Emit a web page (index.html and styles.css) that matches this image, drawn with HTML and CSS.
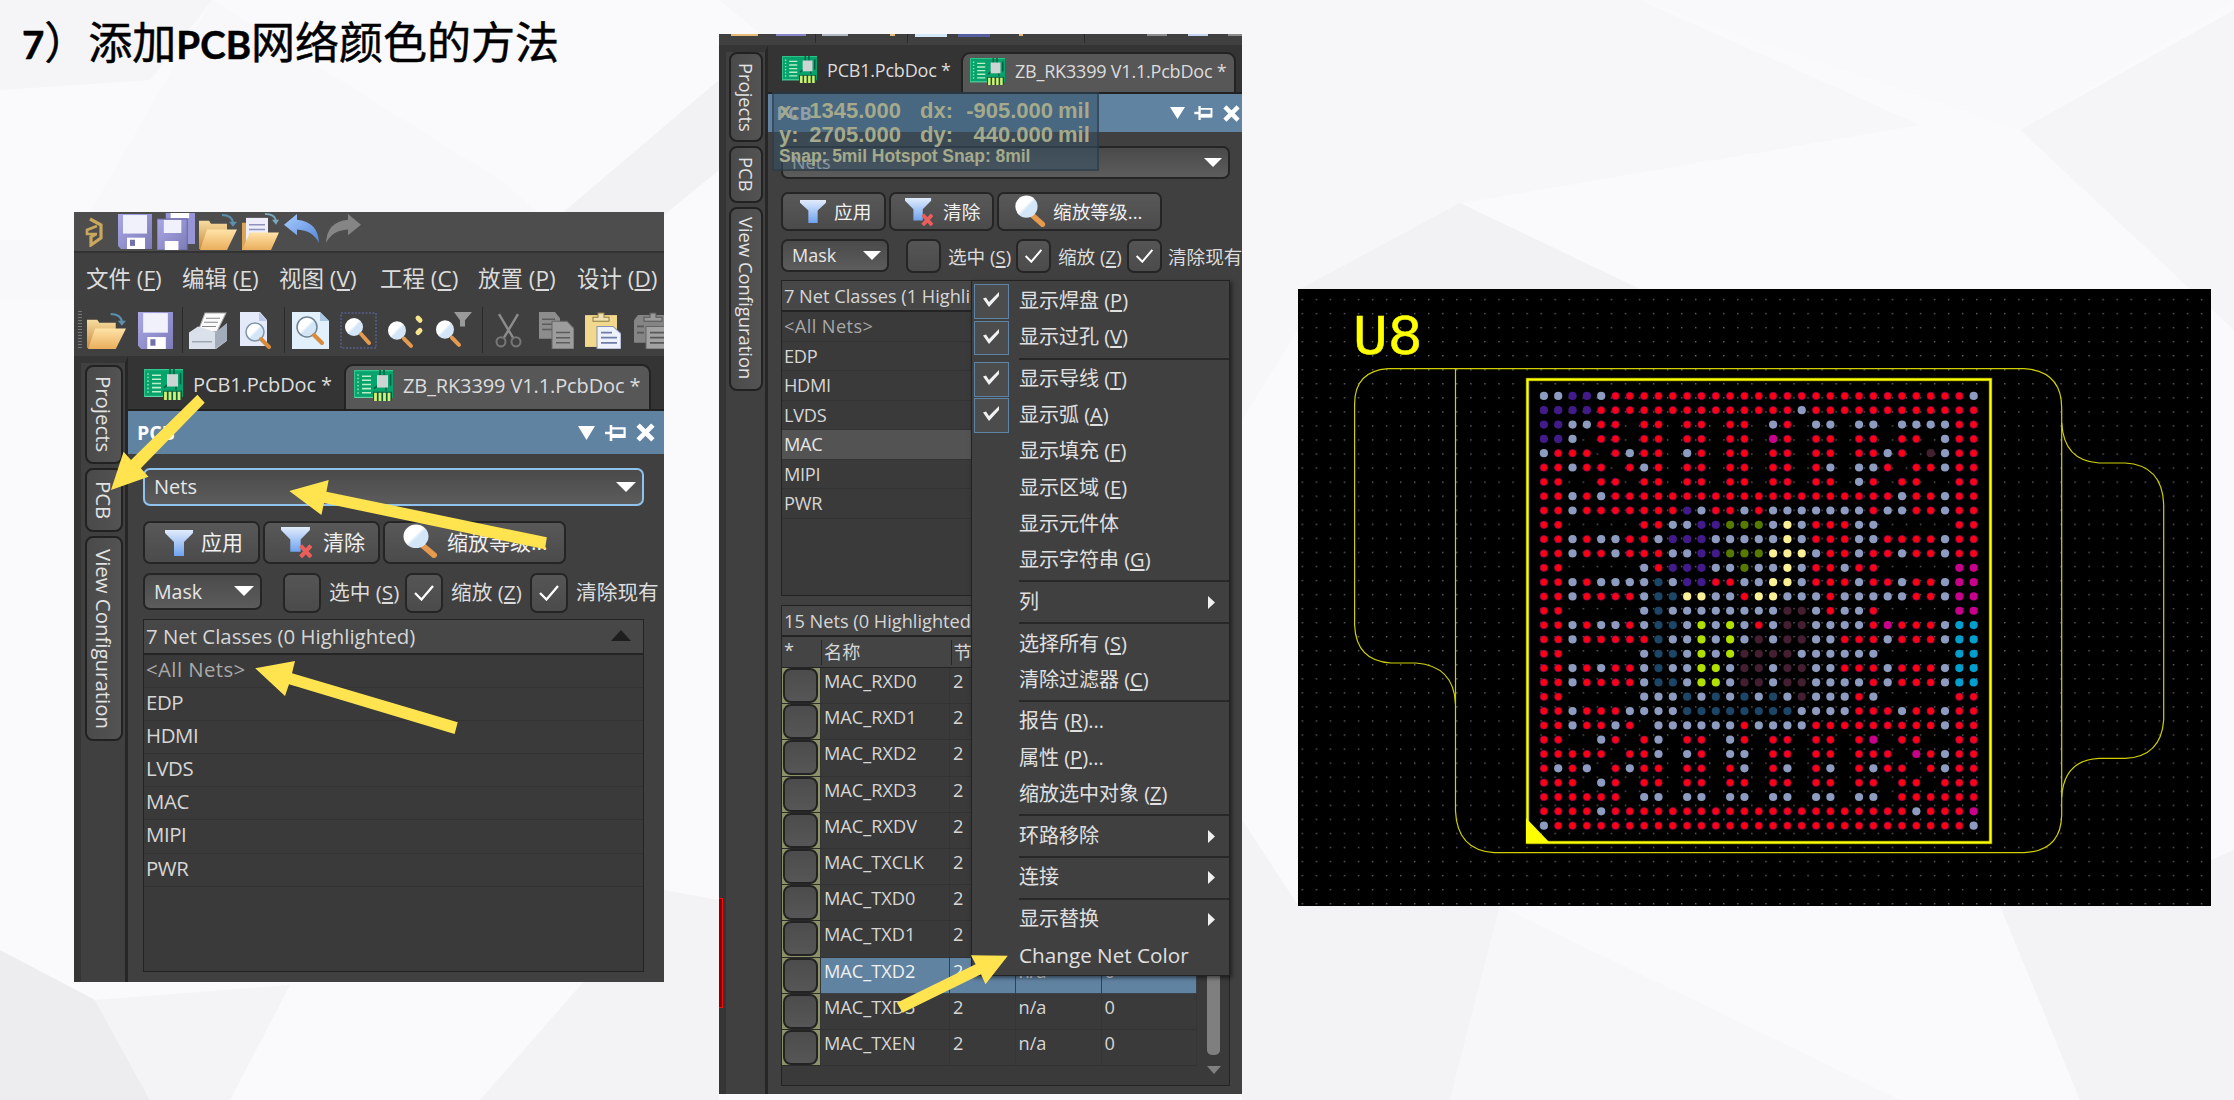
FILE: index.html
```
<!DOCTYPE html>
<html lang="zh-CN">
<head>
<meta charset="utf-8">
<title>添加PCB网络颜色的方法</title>
<link rel="stylesheet" href="styles.css">
</head>
<body>
<svg class="defs" aria-hidden="true">
  <defs>
    <linearGradient id="gFolder" x1="0" y1="0" x2="0" y2="1"><stop offset="0" stop-color="#ffe3a8"/><stop offset="1" stop-color="#e9ae5c"/></linearGradient>
    <linearGradient id="gFolderBack" x1="0" y1="0" x2="0" y2="1"><stop offset="0" stop-color="#f7dca0"/><stop offset="1" stop-color="#c98b3c"/></linearGradient>
    <linearGradient id="gDisk" x1="0" y1="0" x2="1" y2="1"><stop offset="0" stop-color="#aaa8e6"/><stop offset="1" stop-color="#7d7cb8"/></linearGradient>
    <linearGradient id="gGlass" x1="0" y1="0" x2="1" y2="1"><stop offset="0.45" stop-color="#fff"/><stop offset="0.55" stop-color="#d3e6f8"/></linearGradient>
    <linearGradient id="gFunnel" x1="0" y1="0" x2="0" y2="1"><stop offset="0" stop-color="#e2ecfb"/><stop offset="1" stop-color="#6ea3f0"/></linearGradient>
    <linearGradient id="gUndo" x1="0" y1="0" x2="1" y2="1"><stop offset="0" stop-color="#a8ceff"/><stop offset="1" stop-color="#5585d8"/></linearGradient>
  </defs>
  <symbol id="logo" viewBox="0 0 20 30" preserveAspectRatio="none"><path d="M6 2L17 8V21L7 28V20L12 17" fill="none" stroke="#c9a75c" stroke-width="3.200"/><path d="M13 9L3 13V17H13" fill="none" stroke="#c9a75c" stroke-width="2.600"/></symbol>
  <symbol id="disk" viewBox="0 0 34 34" preserveAspectRatio="none"><path d="M0 0H34V34H3L0 31Z" fill="url(#gDisk)"/><path d="M5 1H29V19H5Z" fill="#f1f1fb"/><path d="M9 23H27V34H9Z" fill="#fff"/><path d="M12 25H17V31H12Z" fill="#7472ad"/></symbol>
  <symbol id="disks" viewBox="0 0 39 37" preserveAspectRatio="none"><path d="M9 0H39V31H9Z" fill="#9795d6"/><path d="M14 0H33V5H14Z" fill="#fff"/><path d="M0 6H31V37H0Z" fill="url(#gDisk)" stroke="#6664a0"/><path d="M7 7H25V20H7Z" fill="#f1f1fb"/><path d="M8 28H22V37H8Z" fill="#fff"/></symbol>
  <symbol id="folder" viewBox="0 0 38 38" preserveAspectRatio="none"><path d="M0 8H10L12 11H28V37H0Z" fill="url(#gFolderBack)"/><path d="M8 17H38L28 38H1Z" fill="url(#gFolder)"/><path d="M23 2Q33 2 34 10" fill="none" stroke="#5b8fae" stroke-width="2.200"/><path d="M30 9H38L34 14Z" fill="#5b8fae"/></symbol>
  <symbol id="folderdoc" viewBox="0 0 38 38" preserveAspectRatio="none"><path d="M1 10H8V38H1Z" fill="#dca556"/><path d="M5 5H27V36H5Z" fill="#eeedfa"/><path d="M8 12H24M8 17H24M8 22H24" stroke="#8f92ba" stroke-width="1.600"/><path d="M9 20H38L30 38H1Z" fill="url(#gFolder)"/><path d="M24 1Q34 1 35 8" fill="none" stroke="#7aa9bd" stroke-width="2"/><path d="M31 7H38L35 12Z" fill="#7aa9bd"/></symbol>
  <symbol id="undo" viewBox="0 0 36 30" preserveAspectRatio="none"><path d="M0 11L13 0V6Q34 8 35 30Q29 17 13 16V22Z" fill="url(#gUndo)"/></symbol>
  <symbol id="redo" viewBox="0 0 36 30" preserveAspectRatio="none"><path d="M36 11L23 0V6Q2 8 1 30Q7 17 23 16V22Z" fill="#858585"/></symbol>
  <symbol id="print" viewBox="0 0 38 36" preserveAspectRatio="none"><path d="M16 1H37L28 19H9Z" fill="#fbfbfb" stroke="#aaa"/><path d="M17 6H31M15 10H29M13 14H27" stroke="#888"/><path d="M0 20L9 14L28 20L38 11V28L27 36H0Z" fill="#dbe1ea"/><path d="M26 20L38 11V28L26 36Z" fill="#a3acba"/><path d="M3 29H23" stroke="#838d9c"/></symbol>
  <symbol id="preview" viewBox="0 0 32 37" preserveAspectRatio="none"><path d="M0 0H20L27 8V34H0Z" fill="#e4eafa"/><path d="M19 0V9H27" fill="#bcc8ea"/><circle cx="15" cy="20" r="9" fill="url(#gGlass)" stroke="#7f98a8" stroke-width="1.500"/><path d="M21 27L29 35" stroke="#d98b3d" stroke-width="4" stroke-linecap="round"/></symbol>
  <symbol id="zoomdoc" viewBox="0 0 37 37" preserveAspectRatio="none"><path d="M0 0H28L37 9V37H0Z" fill="#e2f0fb"/><path d="M28 0V9H37" fill="#aac8e4"/><circle cx="15" cy="15" r="10" fill="url(#gGlass)" stroke="#6f8391" stroke-width="1.500"/><path d="M22 23L30 31" stroke="#d98b3d" stroke-width="4" stroke-linecap="round"/></symbol>
  <symbol id="mag" viewBox="0 0 36 36" preserveAspectRatio="none"><path d="M21 23L32 33" stroke="#e59a4d" stroke-width="6" stroke-linecap="round"/><circle cx="14" cy="13" r="12.500" fill="url(#gGlass)"/></symbol>
  <symbol id="zoomsel" viewBox="0 0 37 37" preserveAspectRatio="none"><path d="M1 1H36V36H1Z" fill="none" stroke="#5f6cb4" stroke-dasharray="2 1.500"/><circle cx="14" cy="15" r="9" fill="url(#gGlass)"/><path d="M21 22L29 31" stroke="#e59a4d" stroke-width="4" stroke-linecap="round"/></symbol>
  <symbol id="zoomdots" viewBox="0 0 36 36" preserveAspectRatio="none"><circle cx="9" cy="18" r="9" fill="url(#gGlass)"/><path d="M16 26L23 33" stroke="#e59a4d" stroke-width="4" stroke-linecap="round"/><path d="M30 6L32 8M30 20L32 18" stroke="#f6e58a" stroke-width="5" stroke-linecap="round"/></symbol>
  <symbol id="zoomfilter" viewBox="0 0 36 36" preserveAspectRatio="none"><circle cx="9" cy="17" r="9" fill="url(#gGlass)"/><path d="M16 25L23 32" stroke="#e59a4d" stroke-width="4" stroke-linecap="round"/><path d="M18 0H36L29 8V14H24V8Z" fill="#9a9a9a"/></symbol>
  <symbol id="cut" viewBox="0 0 27 36" preserveAspectRatio="none"><path d="M4 2L18 25M23 2L9 25" stroke="#8c8c8c" stroke-width="2.400"/><circle cx="6" cy="29" r="4.500" fill="none" stroke="#777" stroke-width="2"/><circle cx="21" cy="29" r="4.500" fill="none" stroke="#777" stroke-width="2"/></symbol>
  <symbol id="copy" viewBox="0 0 35 36" preserveAspectRatio="none"><path d="M0 0H16L21 6V26H0Z" fill="#8d8d8d"/><path d="M3 7H16M3 12H17M3 17H17" stroke="#5c5c5c" stroke-width="1.500"/><path d="M13 9H28L35 16V36H13Z" fill="#9c9c9c" stroke="#666"/><path d="M17 20H31M17 25H31M17 30H31" stroke="#5c5c5c" stroke-width="1.500"/></symbol>
  <symbol id="paste" viewBox="0 0 36 36" preserveAspectRatio="none"><path d="M0 3H32V34H0Z" fill="#f2d88c"/><path d="M8 9V5H13V1H19V5H24V9Z" fill="#efe0ae" stroke="#8d7c42"/><path d="M12 14H28L36 21V36H12Z" fill="#eef2fc" stroke="#8492b4"/><path d="M16 20H27M16 25H32M16 30H32" stroke="#6e7ea6" stroke-width="1.600"/></symbol>
  <symbol id="pasteoff" viewBox="0 0 36 36" preserveAspectRatio="none"><path d="M4 3H36V30H0V8Z" fill="#858585"/><path d="M10 9V5H16V1H22V5H28V9Z" fill="#999" stroke="#555"/><path d="M12 14H36V36H12Z" fill="#a2a2a2" stroke="#666"/><path d="M3 14H10M3 20H10M16 20H33M16 25H33M16 30H33" stroke="#585858" stroke-width="1.600"/></symbol>
  <symbol id="pcb" viewBox="0 0 39 30" preserveAspectRatio="none"><path d="M0 0H39V27H35V30H19V27H0Z" fill="#06a36c"/><path d="M0 26.500H19" stroke="#6fdcae"/><path d="M.6 27V.6H39" fill="none" stroke="#35c78d"/><path d="M8 6H17M8 10H17M8 14H17M8 18H17M8 22H17" stroke="#baf0c8" stroke-width="1.500"/><path d="M4 4V24" stroke="#97e3bb" stroke-width="1.500" stroke-dasharray="1.500 2"/><path d="M26 0V6M30 0V6M36.500 4V15M20 18L24 15M32 16V20" stroke="#045e44" stroke-width="1.600"/><path d="M23 5H34V17H23Z" fill="#cdd5d4"/><path d="M19 21H38V30H19Z" fill="#045e44"/><path d="M21.500 22V30M26 22V30M30.500 22V30M35 22V30" stroke="#d8ee72" stroke-width="2.800"/></symbol>
  <symbol id="funnel" viewBox="0 0 28 26" preserveAspectRatio="none"><path d="M0 0H28V3L19 12V26H9V12L0 3Z" fill="url(#gFunnel)"/></symbol>
  <symbol id="unfilter" viewBox="0 0 30 30" preserveAspectRatio="none"><path d="M0 0H28V3L19 12V24H9V12L0 3Z" fill="url(#gFunnel)"/><path d="M19 18L29 29M29 18L19 29" stroke="#ea5f5c" stroke-width="4"/></symbol>
  <symbol id="tick" viewBox="0 0 20 16"><path d="M1 8L7.500 14.500L19 1" fill="none" stroke="#fff" stroke-width="2.300"/></symbol>
  <symbol id="mtick" viewBox="0 0 18 16"><path d="M0 6.500L3 5.500L6 10L16 0V4L6 15Z" fill="#f2f2f2"/></symbol>
  <symbol id="down" viewBox="0 0 18 10" preserveAspectRatio="none"><path d="M0 0H18L9 10Z" fill="currentColor"/></symbol>
  <symbol id="right" viewBox="0 0 7 13"><path d="M0 0L7 6.500L0 13Z" fill="#f0f0f0"/></symbol>
  <symbol id="pin" viewBox="0 0 21 16"><path d="M0 8H6M6 0V16" stroke="#fff" stroke-width="2.600"/><path d="M7 3.300H19.600V12H7" fill="none" stroke="#fff" stroke-width="2.200"/><path d="M7 11H20" stroke="#fff" stroke-width="4"/></symbol>
  <symbol id="close" viewBox="0 0 18 18"><path d="M2 2L16 16M16 2L2 16" stroke="#fff" stroke-width="4.600"/></symbol>
</svg>

<svg class="backdrop" viewBox="0 0 2234 1100" aria-hidden="true">
  <polygon points="212,0 500,180 640,300 0,300 0,240 74,240" fill="#f8f8fa"/>
  <polygon points="212,0 0,0 0,90 150,80" fill="#f5f5f8"/>
  <polygon points="719,80 560,215 664,215 719,170" fill="#f2f2f4"/>
  <polygon points="719,0 1640,0 1920,125 1463,203 1298,330 1242,420" fill="#f7f7f9"/>
  <polygon points="1460,203 1300,289 1640,289" fill="#f2f2f4"/>
  <polygon points="1640,0 2020,130 2234,0" fill="#f9f9fb"/>
  <polygon points="2020,130 2234,10 2234,330" fill="#f5f5f7"/>
  <polygon points="0,950 95,1000 150,1100 0,1100" fill="#ededf0"/>
  <polygon points="95,1000 290,985 230,1100 150,1100" fill="#f4f4f6"/>
  <polygon points="664,890 719,900 719,1100 480,1100" fill="#f3f3f5"/>
  <polygon points="1242,820 1298,905 1500,906 1450,1100 1242,1100" fill="#f3f3f6"/>
  <polygon points="1500,906 1900,1100 1450,1100" fill="#f7f7f9"/>
  <polygon points="2211,860 2234,850 2234,1100 2080,1100 2000,906 2211,906" fill="#f3f3f6"/>
</svg>

<main class="slide">
  <section class="left">
    <h1><b>7</b>）添加<b>PCB</b>网络颜色的方法</h1>

    <div class="win one">
      <div class="titlebar">
        <svg class="i-logo"><use href="#logo"/></svg><svg class="i-save"><use href="#disk"/></svg><svg class="i-saves"><use href="#disks"/></svg><svg class="i-fold"><use href="#folder"/></svg><svg class="i-fold"><use href="#folderdoc"/></svg><svg class="i-undo"><use href="#undo"/></svg><svg class="i-undo"><use href="#redo"/></svg>
      </div>
      <nav class="menubar"><span>文件 (<u>F</u>)</span><span>编辑 (<u>E</u>)</span><span>视图 (<u>V</u>)</span><span>工程 (<u>C</u>)</span><span>放置 (<u>P</u>)</span><span>设计 (<u>D</u>)</span></nav>
      <div class="toolbar">
        <i class="grip"></i><svg class="w39"><use href="#folder"/></svg><svg class="w35"><use href="#disk"/></svg><i class="bar"></i>
        <svg class="w38"><use href="#print"/></svg><svg class="w31"><use href="#preview"/></svg><i class="bar"></i>
        <svg class="w37"><use href="#zoomdoc"/></svg><svg class="w37"><use href="#zoomsel"/></svg><svg class="w36"><use href="#zoomdots"/></svg><svg class="w36"><use href="#zoomfilter"/></svg><i class="bar"></i>
        <svg class="w27"><use href="#cut"/></svg><svg class="w35"><use href="#copy"/></svg><svg class="w36"><use href="#paste"/></svg><svg class="w36"><use href="#pasteoff"/></svg>
      </div>
      <div class="work">
        <aside class="side"><div class="vtab projects"><b>Projects</b></div><div class="vtab pcb"><b>PCB</b></div><div class="vtab view"><b>View Configuration</b></div></aside>
        <div class="main">
          <div class="doctabs">
            <div class="doctab"><svg><use href="#pcb"/></svg><span>PCB1.PcbDoc *</span></div>
            <div class="doctab active"><svg><use href="#pcb"/></svg><span>ZB_RK3399 V1.1.PcbDoc *</span></div>
          </div>
          <header class="panelhead"><span>PCB</span><svg class="h-down"><use href="#down"/></svg><svg class="h-pin"><use href="#pin"/></svg><svg class="h-close"><use href="#close"/></svg></header>
          <div class="content">
            <div class="combo focus"><span>Nets</span><svg><use href="#down"/></svg></div>
            <div class="buttons">
              <div class="btn apply"><svg><use href="#funnel"/></svg><span>应用</span></div>
              <div class="btn clear"><svg><use href="#unfilter"/></svg><span>清除</span></div>
              <div class="btn zoom"><svg><use href="#mag"/></svg><span>缩放等级...</span></div>
            </div>
            <div class="options">
              <div class="combo mask"><span>Mask</span><svg><use href="#down"/></svg></div>
              <i class="check first"></i><span class="o1">选中 (<u>S</u>)</span>
              <i class="check"><svg><use href="#tick"/></svg></i><span class="o2">缩放 (<u>Z</u>)</span>
              <i class="check"><svg><use href="#tick"/></svg></i><span class="o3">清除现有</span>
            </div>
            <div class="list classes">
              <div class="listhead"><span>7 Net Classes (0 Highlighted)</span><svg class="up"><use href="#down"/></svg></div>
              <div class="row all">&lt;All Nets&gt;</div><div class="row">EDP</div><div class="row">HDMI</div><div class="row">LVDS</div><div class="row">MAC</div><div class="row">MIPI</div><div class="row">PWR</div>
            </div>
            <div class="nextlist"></div>
          </div>
        </div>
      </div>
    </div>
  </section>

  <section class="win two">
    <div class="toolslice"><i class="s1"></i><i class="s2"></i><i class="sb"></i><i class="s3"></i><i class="s4"></i><i class="sb b2"></i><i class="s5"></i><i class="s6"></i><i class="s7"></i><i class="sb b3"></i><i class="s8"></i><i class="s9"></i><i class="s10"></i></div>
    <div class="work">
      <aside class="side"><div class="vtab projects"><b>Projects</b></div><div class="vtab pcb"><b>PCB</b></div><div class="vtab view"><b>View Configuration</b></div></aside>
      <div class="main">
        <div class="doctabs">
          <div class="doctab"><svg><use href="#pcb"/></svg><span>PCB1.PcbDoc *</span></div>
          <div class="doctab active"><svg><use href="#pcb"/></svg><span>ZB_RK3399 V1.1.PcbDoc *</span></div>
        </div>
        <header class="panelhead"><span>PCB</span><svg class="h-down"><use href="#down"/></svg><svg class="h-pin"><use href="#pin"/></svg><svg class="h-close"><use href="#close"/></svg></header>
        <div class="content">
          <div class="combo"><span>Nets</span><svg><use href="#down"/></svg></div>
          <div class="buttons">
            <div class="btn apply"><svg><use href="#funnel"/></svg><span>应用</span></div>
            <div class="btn clear"><svg><use href="#unfilter"/></svg><span>清除</span></div>
            <div class="btn zoom"><svg><use href="#mag"/></svg><span>缩放等级...</span></div>
          </div>
          <div class="options">
            <div class="combo mask"><span>Mask</span><svg><use href="#down"/></svg></div>
            <i class="check first"></i><span class="o1">选中 (<u>S</u>)</span>
            <i class="check"><svg><use href="#tick"/></svg></i><span class="o2">缩放 (<u>Z</u>)</span>
            <i class="check"><svg><use href="#tick"/></svg></i><span class="o3">清除现有</span>
          </div>
          <div class="list classes">
            <div class="listhead"><span>7 Net Classes (1 Highli</span></div>
            <div class="row all">&lt;All Nets&gt;</div><div class="row">EDP</div><div class="row">HDMI</div><div class="row">LVDS</div><div class="row sel">MAC</div><div class="row">MIPI</div><div class="row">PWR</div>
          </div>
          <div class="list nets">
            <div class="listhead"><span>15 Nets (0 Highlighted</span></div>
            <div class="cols"><span>*</span><span>名称</span><span>节</span></div>
            <div class="netrows" id="netrows"></div>
            <div class="scroll"><i></i><svg><use href="#down"/></svg></div>
          </div>
        </div>
      </div>
    </div>
    <div class="coords">
      <div class="cl"><span>x:</span><span>1345.000</span><span>dx:</span><span>-905.000</span><span>mil</span></div>
      <div class="cl"><span>y:</span><span>2705.000</span><span>dy:</span><span>440.000</span><span>mil</span></div>
      <div class="snap">Snap: 5mil Hotspot Snap: 8mil</div>
    </div>
    <div class="ctx">
      <div class="mi on"><i><svg><use href="#mtick"/></svg></i><span>显示焊盘 (<u>P</u>)</span></div>
      <div class="mi on"><i><svg><use href="#mtick"/></svg></i><span>显示过孔 (<u>V</u>)</span></div>
      <hr>
      <div class="mi on"><i><svg><use href="#mtick"/></svg></i><span>显示导线 (<u>T</u>)</span></div>
      <div class="mi on"><i><svg><use href="#mtick"/></svg></i><span>显示弧 (<u>A</u>)</span></div>
      <div class="mi"><span>显示填充 (<u>F</u>)</span></div>
      <div class="mi"><span>显示区域 (<u>E</u>)</span></div>
      <div class="mi"><span>显示元件体</span></div>
      <div class="mi"><span>显示字符串 (<u>G</u>)</span></div>
      <hr>
      <div class="mi"><span>列</span><svg class="sub"><use href="#right"/></svg></div>
      <hr>
      <div class="mi"><span>选择所有 (<u>S</u>)</span></div>
      <div class="mi"><span>清除过滤器 (<u>C</u>)</span></div>
      <hr>
      <div class="mi"><span>报告 (<u>R</u>)...</span></div>
      <div class="mi"><span>属性 (<u>P</u>)...</span></div>
      <div class="mi"><span>缩放选中对象 (<u>Z</u>)</span></div>
      <hr>
      <div class="mi"><span>环路移除</span><svg class="sub"><use href="#right"/></svg></div>
      <hr>
      <div class="mi"><span>连接</span><svg class="sub"><use href="#right"/></svg></div>
      <hr>
      <div class="mi"><span>显示替换</span><svg class="sub"><use href="#right"/></svg></div>
      <div class="mi"><span class="en">Change Net Color</span></div>
    </div>
    <i class="redmark"></i>
  </section>

  <section class="board">
    <svg viewBox="1298 289 913 617" id="board">
      <defs><pattern id="grid" width="14.05" height="14.05" x="1301.600" y="298.800" patternUnits="userSpaceOnUse"><rect width="1.400" height="1.400" fill="#666"/></pattern></defs>
      <rect x="1298" y="289" width="913" height="617" fill="#000"/>
      <rect x="1298" y="289" width="913" height="617" fill="url(#grid)"/>
      <text class="ref" x="1353" y="354">U8</text>
      <g fill="none" stroke="#d0d000" stroke-width="1.200">
        <path d="M1388 368.600H2024Q2061.700 371 2061.700 408V815Q2061 851 2024 852.700H1494Q1457 850 1455.500 811V368.600"/>
        <path d="M1388 368.600Q1354.600 371 1354.600 404V625Q1356 661 1391 663H1416Q1454 666 1455.500 704"/>
        <path d="M2061.700 423Q2064 461 2099 463H2125Q2162 465 2163.700 504V720Q2161 757 2125 758.300H2099Q2064 760 2061.700 797"/>
      </g>
      <rect x="1527.500" y="379.500" width="463" height="463" fill="none" stroke="#8a8a00" stroke-width="3.400"/>
      <rect x="1527.500" y="379.500" width="463" height="463" fill="none" stroke="#ff0" stroke-width="2"/>
      <path d="M1526 818V843H1550Z" fill="#ff0"/>
      <g id="balls"></g>
    </svg>
  </section>
</main>

<svg class="arrows" viewBox="0 0 2234 1100" aria-hidden="true">
  <g fill="#ffe44f">
    <path d="M111 490L123.600 451.700L131 460L197.400 394.700L204.700 402.700L140.800 468.300L148.500 476.700Z"/>
    <path d="M289.300 491L328.700 480L326.400 491.700L546.800 537.300L545 549.300L324 503L321.400 515Z"/>
    <path d="M255.200 668.300L295 661L292 673.300L457.700 722.300L454.600 734L289 684.300L285 696Z"/>
    <path d="M1007.800 955.700L971 955.300L975.600 964.300L896.900 1002.700L902.600 1012.700L981 974.300L985.500 984.300Z"/>
  </g>
</svg>
<script src="board.js"></script>
</body>
</html>
```

FILE: styles.css
```
* { box-sizing: border-box; }

body {
  margin: 0;
  width: 2234px;
  height: 1100px;
  overflow: hidden;
  position: relative;
  background: #fafafc;
  color: #dcdcdc;
  font-family: "Open Sans", "Noto Sans CJK SC", sans-serif;
}

i, .vtab b { font-style: normal; font-weight: 400; display: block; }
u { text-underline-offset: 2px; text-decoration-thickness: 1.5px; }
svg { display: block; flex: none; }
.defs { position: absolute; width: 0; height: 0; }
.backdrop, .arrows { position: absolute; left: 0; top: 0; width: 2234px; height: 1100px; }
.backdrop { z-index: -1; }

.slide { display: flex; align-items: flex-start; height: 1100px; }
.left { width: 664px; margin-right: 55px; }

h1 {
  margin: 0 0 0 22px;
  height: 212px;
  padding-top: 8px;
  font: 400 44px/64px "Noto Sans CJK SC", sans-serif;
  -webkit-text-stroke: .5px #000;
  color: #000;
  white-space: nowrap;
}
h1 b { font-family: "Lato", sans-serif; font-weight: 700; font-size: 38.500px; }

/* application windows */
.win { position: relative; overflow: hidden; background: #404040; white-space: nowrap; }
.one { margin-left: 74px; width: 590px; height: 770px; font-size: 20.400px; }
.two { margin-top: 34px; width: 523px; height: 1060px; font-size: 19.200px; }

.titlebar {
  display: flex;
  align-items: center;
  height: 41px;
  padding: 0 0 0 10px;
  background: #4d4d4d;
  border-bottom: 2px solid #333;
}
.i-logo { width: 20px; height: 30px; margin-right: 14px; }
.i-save { width: 34px; height: 35px; margin-right: 5px; }
.i-saves { width: 38px; height: 37px; margin-right: 4px; }
.i-fold { width: 38px; height: 37px; margin-right: 4px; }
.i-undo { width: 36px; height: 29px; margin: -7px 4px 0 1px; }

.menubar {
  display: grid;
  grid-template-columns: 96px 97px 101px 98px 99px auto;
  height: 54px;
  padding-left: 12px;
  line-height: 51px;
  font-size: 22.500px;
}

.toolbar {
  display: grid;
  grid-template-columns: 9px 51px 44px 7px 51px 44px 8px 48px 48px 48px 46px 13px 44px 46px 49px 36px;
  align-items: center;
  height: 49px;
  padding: 0 0 3px 4px;
}
.toolbar svg { height: 37px; }
.grip { width: 4px; height: 39px; background: repeating-linear-gradient(#777 0 1px, #404040 1px 3px); }
.bar { width: 1px; height: 46px; background: #2a2a2a; }
.w27 { width: 27px; } .w31 { width: 32px; } .w35 { width: 35px; } .w36 { width: 36px; }
.w37 { width: 37px; } .w38 { width: 38px; } .w39 { width: 39px; }

.toolslice { display: flex; height: 11px; padding-left: 3px; background: #404040; }
.toolslice i { height: 2px; background: #e6bd78; width: 27px; margin-left: 9px; }
.toolslice .s2 { background: #8885c6; width: 31px; margin-left: 18px; }
.toolslice .sb { width: 1px; height: 9px; background: #2a2a2a; margin-left: 9px; }
.toolslice .s3 { background: #b2b9c4; width: 27px; margin-left: 6px; }
.toolslice .s4 { width: 5px; margin-left: 42px; }
.toolslice .b2 { margin-left: 12px; }
.toolslice .s5 { background: #d3e8f8; width: 32px; height: 3px; margin-left: 7px; }
.toolslice .s6 { background: #535f9e; width: 33px; height: 3px; margin-left: 11px; }
.toolslice .s7 { width: 4px; margin-left: 29px; }
.toolslice .b3 { margin-left: 61px; }
.toolslice .s8 { background: #8d8d8d; width: 20px; margin-left: 62px; }
.toolslice .s9 { background: #c5d4f1; width: 21px; margin-left: 21px; }
.toolslice .s10 { background: #8d8d8d; width: 14px; margin-left: 20px; }

.work { display: flex; height: 626px; background: #404040; }
.two .work { height: 1049px; }
.side {
  display: flex;
  flex-direction: column;
  gap: 4px;
  width: 54px;
  border-left: 7px solid #353535;
  border-right: 3px solid #262626;
  border-top: 7px solid #353535;
  padding: 2px 4px 0 4px;
}
.two .side { width: 48.500px; gap: 3.500px; padding: 0 3px 0 3px; }
.vtab {
  width: 38px;
  border: 2px solid #212121;
  border-radius: 8px;
  background: linear-gradient(90deg, #4a4a4a, #535353);
  color: #e2e2e2;
  display: flex;
  align-items: center;
  justify-content: center;
}
.vtab b { writing-mode: vertical-rl; line-height: 1; margin-right: 1px; }
.one .projects { height: 99px; } .one .pcb { height: 64px; } .one .view { height: 205px; }
.two .vtab { width: 34px; }
.two .projects { height: 90px; } .two .pcb { height: 57.500px; } .two .view { height: 184px; }
.one .vtab b { font-size: 20.400px; } .two .vtab b { font-size: 18.400px; }

.main { flex: 1; min-width: 0; }
.doctabs { display: flex; background: #343434; border-bottom: 2px solid #222; height: 55px; padding-top: 8px; }
.two .doctabs { height: 49px; padding-top: 7px; }
.doctab { display: flex; align-items: center; width: 216px; padding: 0 0 4px 16px; height: 44px; }
.doctab.active { width: 307px; height: 45px; padding-left: 8px; border: 2px solid #232323; border-bottom: 0; border-radius: 9px 9px 0 0; background: #575757; }
.doctab svg { width: 39px; height: 31px; margin-right: 10px; }
.one .doctab span { font-size: 20px; letter-spacing: -0.120px; }
.two .doctab { width: 193.500px; height: 39.500px; padding-left: 14.500px; }
.two .doctab.active { width: 275px; height: 40px; padding-left: 7px; }
.two .doctab svg { width: 35px; height: 27px; }
.two .doctab span { font-size: 18px; letter-spacing: -0.200px; }

.panelhead {
  display: flex;
  align-items: center;
  height: 43px;
  padding: 0 9px;
  background: #6183a2;
  color: #fff;
  font-weight: 700;
  font-size: 19.600px;
}
.panelhead span { flex: 1; }
.h-down { width: 17px; height: 14px; margin-right: 10px; color: #fff; }
.h-pin { width: 21px; height: 16px; margin-right: 10px; }
.h-close { width: 19px; height: 19px; }
.two .panelhead { height: 38px; padding-right: 2px; font-size: 18.200px; }
.two .h-down { width: 15px; height: 12px; margin-right: 9px; }
.two .h-pin { width: 19px; height: 14px; }
.two .h-close { width: 17px; height: 17px; }

.content { padding: 14px 0 0 15px; width: 516px; }
.two .content { padding-left: 13.500px; width: 462.500px; }

.combo {
  display: flex;
  align-items: center;
  justify-content: space-between;
  height: 38px;
  padding: 0 6px 1px 9px;
  border: 2px solid #252525;
  border-radius: 7px;
  background: linear-gradient(#4a4a4a, #5c5c5c);
  color: #e6e6e6;
}
.combo svg { width: 20px; height: 10px; color: #fff; }
.combo.focus { border-color: #8fc3ee; font-size: 20px; }
.two .combo { height: 33px; font-size: 18px; }
.two .combo svg { width: 18px; height: 9px; }

.buttons { display: flex; gap: 3px; margin-top: 15px; height: 43px; }
.btn {
  display: flex;
  align-items: center;
  padding-left: 20px;
  border: 2px solid #252525;
  border-radius: 7px;
  background: linear-gradient(#585858, #4b4b4b);
  color: #f0f0f0;
  font-size: 21px;
}
.btn span { margin-top: -3px; }
.apply { width: 117px; } .clear { width: 117px; padding-left: 16px; } .zoom { width: 183px; padding-left: 17px; }
.apply svg { width: 28px; height: 26px; margin-right: 8px; }
.clear svg { width: 31px; height: 31px; margin-right: 11px; }
.zoom svg { width: 36px; height: 34px; margin: -3px 9px 0 0; }
.two .buttons { margin-top: 13px; height: 39px; }
.two .btn { font-size: 18.700px; }
.two .btn span { margin-top: -2px; }
.two .apply { width: 105px; padding-left: 17px; } .two .clear { width: 105px; padding-left: 14px; } .two .zoom { width: 165px; padding-left: 15px; }
.two .apply svg { width: 26px; height: 23px; }
.two .clear svg { width: 28px; height: 28px; margin-right: 10px; }
.two .zoom svg { width: 32px; height: 32px; margin: -2px 7px 0 0; }

.options { display: flex; align-items: flex-start; height: 40px; margin-top: 9px; font-size: 20.700px; line-height: 39px; }
.options > * { flex: none; }
.mask { width: 119px; height: 37px; margin-right: 21px; line-height: normal; font-size: 19.600px; }
.check { width: 38px; height: 40px; border: 2px solid #252525; border-radius: 7px; background: linear-gradient(#555, #4b4b4b); padding: 10px 7px; }
.check svg { width: 20px; height: 16px; }
.o1, .o2, .o3 { padding-left: 8px; }
.o1 { width: 84px; } .o2 { width: 87px; }
.two .options { height: 34px; margin-top: 8px; font-size: 18.600px; line-height: 35px; }
.two .mask { width: 108px; margin-right: 17px; font-size: 18px; height: 33px; }
.two .check { width: 35px; height: 34px; padding: 8px 6px; }
.two .check svg { width: 19px; height: 14px; }
.two .o1 { width: 75px; padding-left: 7px; } .two .o2 { width: 76px; padding-left: 7px; } .two .o3 { padding-left: 6px; }

.list { border: 1.500px solid #232323; background: #3a3a3a; color: #d6d6d6; }
.classes { width: 501px; height: 353px; margin-top: 6px; }
.listhead {
  display: flex;
  align-items: center;
  justify-content: space-between;
  height: 35px;
  padding: 0 12px 2px 2px;
  background: #474747;
  border-bottom: 2px solid #242424;
}
.one .listhead { letter-spacing: 0; }
.up { width: 20px; height: 11px; transform: scaleY(-1); color: #1e1e1e; }
.row { height: 33.100px; line-height: 29px; padding-left: 2px; border-bottom: 1px solid #333; letter-spacing: -0.400px; }
.row.all { color: #a9a9a9; letter-spacing: .400px; }
.nextlist { width: 501px; margin-top: 10px; border-top: 2px solid #232323; }
.two .classes { width: 449px; height: 316px; margin-top: 7px; font-size: 18.200px; }
.two .listhead { height: 31px; padding-bottom: 0; }
.two .row { height: 29.500px; line-height: 28px; letter-spacing: -0.300px; }
.two .row.all { letter-spacing: .400px; }
.two .row.sel { background: #535353; color: #e6e6e6; }

.nets { position: relative; width: 449px; height: 481px; margin-top: 9px; font-size: 18.200px; }
.cols { display: grid; grid-template-columns: 39px 129.500px 1fr; height: 31px; line-height: 30px; background: #444; border-bottom: 1px solid #242424; }
.cols span { padding-left: 2px; border-left: 1px solid #262626; margin: 3px 0; line-height: 25px; }
.cols span:first-child { border: 0; line-height: 20px; }
.netrow { display: grid; grid-template-columns: 39px 129px 65.500px 86px 95px; width: 415px; height: 36.200px; line-height: 27px; }
.netrow > * { border-right: 1px solid #353535; border-bottom: 1px solid #333; padding-left: 3px; letter-spacing: 0; }
.netrow .cell { padding: 0 3px 0 1px; background: #8d9168; border-bottom: 1px solid #2a2a2a; }
.netrow .cell i { width: 35px; height: 35px; border: 2px solid #232323; border-radius: 8px; background: linear-gradient(#4c4c4c, #565656); }
.netrow.sel span { background: #6183a2; color: #f0f0f0; border-color: #39424b; }
.scroll { position: absolute; right: 8px; top: 250px; width: 14px; display: flex; flex-direction: column; gap: 11px; }
.scroll i { width: 13px; height: 199px; border-radius: 0 0 5px 5px; background: #7f7f7f; }
.scroll svg { width: 14px; height: 8px; color: #808080; }

/* coordinate read-out floating over the panel */
.coords {
  position: absolute;
  left: 53px;
  top: 58px;
  width: 327px;
  height: 79px;
  padding: 5px 0 0 5px;
  background: rgba(52, 80, 101, .55);
  border: 2px solid rgba(40, 50, 58, .5);
  color: #a4aa8b;
  font: 700 22px/24px "Liberation Sans", Arial, sans-serif;
}
.cl { display: grid; grid-template-columns: 30px 92px 52px 100px 1fr; }
.cl span:nth-child(2), .cl span:nth-child(4) { text-align: right; }
.cl span:nth-child(3) { padding-left: 19px; }
.cl span:nth-child(5) { padding-left: 5px; }
.snap { font-size: 17.500px; line-height: 19px; letter-spacing: -0.050px; }

/* context menu */
.ctx {
  position: absolute;
  left: 252px;
  top: 246px;
  width: 259px;
  height: 696px;
  padding-top: 2.500px;
  background: #404040;
  border: 1.500px solid #222;
  box-shadow: 2px 2px 4px rgba(0, 0, 0, .5);
  font-size: 20px;
  color: #e0e0e0;
}
.mi { display: flex; align-items: center; height: 36.200px; padding: 0 14px 0 47px; }
.mi span { flex: 1; line-height: 34px; margin-top: -1px; }
.mi.on { padding-left: 2px; }
.mi.on i { width: 34.500px; height: 34.500px; margin-right: 10.500px; padding: 7px 8px; border: 1.500px solid #5d83a6; background: #4c4c4c; }
.mi.on svg { width: 18px; height: 16px; }
.mi .sub { width: 7px; height: 13px; }
.mi .en { font-size: 20.700px; }
hr { margin: 1.700px 0 1.900px 47px; border: 0; border-top: 2px solid #282828; }
.redmark { position: absolute; left: 0; top: 864px; width: 4px; height: 110px; background: #8a0000; border: 1px solid #f01010; border-left: 0; }

.board { margin: 289px 0 0 56px; width: 913px; height: 617px; background: #000; }
.board svg { width: 913px; height: 617px; }
.ref { font: 58px "Liberation Mono", monospace; fill: #ff0; stroke: #ff0; stroke-width: .5px; }
```

FILE: board.js
```
// Ball map of the BGA, one letter per pad colour.
const colours = {
  g: '#8d9bc0', r: '#ff0010', p: '#431a8c', m: '#c8008c', d: '#431f31',
  o: '#567a00', y: '#fbf096', b: '#1c4668', l: '#b1e000', c: '#009fd0'
};
const rows = [
  'ggppgrrrrrrrrrrrrrrrrrrrrrrrrrg',
  'pppprrrrrrrrrrrrrrgrrrrrrrrrrrr',
  'ppggrr.rr.rr.rr.gr.gg.gg.ggggrr',
  'ppg.rr.rr.rr.rr.mr.rr.rr.rr.grr',
  'grrr.rgrr.gr.rr.rr.rr.rrgr.dgrr',
  'rrgrr.rgr.rr.rr.rr.rg.ggr.rrgrr',
  'rr..rr.rr.rr.rr.rr.rr.gr.rr..rr',
  'rrgrgrrrrrrrrrrrrrrrrrrrrgrrgrr',
  'rrgrrrrrrrpgrrgrgggggggrggrrgrr',
  'rr.....rrggppooogygrrrgg.....rr',
  'rrgrggrrgpppgggggygrrrggrrrrgrr',
  'rrgrrgrrrggppoooyyygrrgrrgrrgrr',
  'rr.....grpppggoggygrrgrr.....mm',
  'rrgrggggbgpprrggyygrrrgrrgrrgmm',
  'rrgrrrrgbbyyggryygggrgggggrrgmm',
  'rr.....gbggggggggddgrggr.....mm',
  'rrgrggrgbbglglgrgddggggrmrrrgcc',
  'rrgrrrrrbgglglgdgddggrrrgrrrgcc',
  'rr.....gbbglglddddgggggg.....cc',
  'rrgrgrrgbggllgddgddggrrrgrrrgcc',
  'rrgrrrrgbbgllgddgddggggrgrrrgcc',
  'rr.....gggbgbgbgbgdgggrg.....rr',
  'rrgrrrggggbbbbbbbbggggrrrgrrgrr',
  'rrgrrgr.ggggggrggggrrrrrrrrrgrr',
  'rr..gr.rg.rr.gr.rr.rr.rm.rr..rr',
  'rrrrr.rrg.gr.gg.rr.rr.rrr.mrgrr',
  'rgrg.rgrr.rr.rg.rg.rg.rgrr.rgrr',
  'rrr.gr.rr.rr.rr.rr.rr.rr.rr.rrr',
  'rrrrrr.gg.gg.gg.gg.gg.gg.rrrrrr',
  'rrrrgrrrrrrrrrrrrrrrrrrrrrgrrrm',
  'grrrrrrrrrrrrrrrrrrrrrrrrrrrrrg'
];
const svgNs = 'http://www.w3.org/2000/svg';
const balls = document.getElementById('balls');
rows.forEach((line, r) => [...line].forEach((key, c) => {
  if (key === '.') return;
  const ball = document.createElementNS(svgNs, 'circle');
  ball.setAttribute('cx', (1543.9 + c * 14.325).toFixed(2));
  ball.setAttribute('cy', (395.9 + r * 14.325).toFixed(2));
  ball.setAttribute('r', key === 'r' ? 3.7 : 4.1);
  ball.setAttribute('fill', colours[key]);
  if (key === 'r') { ball.setAttribute('stroke', '#8a0060'); ball.setAttribute('stroke-width', '0.7'); }
  balls.appendChild(ball);
}));

// Net table
const nets = ['RXD0', 'RXD1', 'RXD2', 'RXD3', 'RXDV', 'TXCLK', 'TXD0', 'TXD1', 'TXD2', 'TXD3', 'TXEN'];
document.getElementById('netrows').innerHTML = nets.map(n =>
  `<div class="netrow${n === 'TXD2' ? ' sel' : ''}"><div class="cell"><i></i></div><span>MAC_${n}</span><span>2</span><span>n/a</span><span>0</span></div>`
).join('');
```
